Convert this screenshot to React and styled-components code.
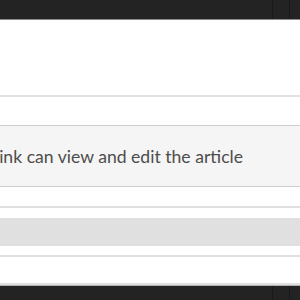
import React from 'react';
import styled, { createGlobalStyle } from 'styled-components';

const Global = createGlobalStyle`
  html, body { margin: 0; padding: 0; background: #fff; }
  body { font-family: Lato, "Open Sans", sans-serif; overflow: hidden; }
`

const Page = styled.div`
  width: 300px;
  height: 300px;
  display: flex;
  flex-direction: column;
  overflow: hidden;
`
const DarkBar = styled.div`
  height: ${p => p.h}px;
  flex: none;
  background: #232323;
  ${p => p.top ? 'border-bottom: 1px solid #8a8a8a;' : 'border-top: 1px solid #b0b0b0;'}
  display: flex;
  justify-content: flex-end;
`
const Slot = styled.div`
  width: ${p => p.w}px;
  border-left: 1px solid #1a1a1a;
`
const Header = styled.div`
  height: 75px;
  flex: none;
  border-bottom: 2px solid #e2e2e2;
`
const Body = styled.div`
  flex: 1;
  padding-top: 28px;
  display: flex;
  flex-direction: column;
`
const Notice = styled.div`
  height: 60px;
  background: #f5f5f5;
  border-top: 1px solid #cfcfcf;
  border-bottom: 1px solid #cfcfcf;
  display: flex;
  align-items: center;
  white-space: nowrap;
  overflow: hidden;
  color: #4d4d4d;
  font-size: 17.6px;
`
const NoticeText = styled.span`
  margin-left: -5px;
`
const Rule = styled.div`
  height: 2px;
  background: #e0e0e0;
  margin-top: ${p => p.mt}px;
`
const Bar = styled.div`
  height: 28px;
  background: #e0e0e0;
  margin-top: 10px;
`

export default function App() {
  return (
    <Page>
      <Global />
      <DarkBar h={19} top>
        <Slot w={16} />
        <Slot w={10} />
      </DarkBar>
      <Header />
      <Body>
        <Notice>
          <NoticeText>link can view and edit the article</NoticeText>
        </Notice>
        <Rule mt={19} />
        <Bar />
        <Rule mt={9} />
        <Rule mt={26} />
      </Body>
      <DarkBar h={18}>
        <Slot w={16} />
        <Slot w={10} />
      </DarkBar>
    </Page>
  )
}
